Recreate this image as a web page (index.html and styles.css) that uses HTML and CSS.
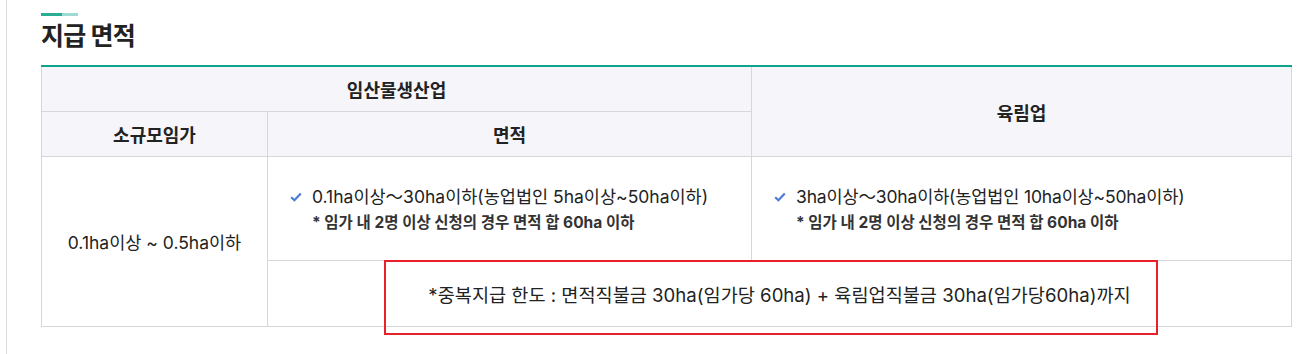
FILE: index.html
```html
<!DOCTYPE html>
<html lang="ko">
<head>
<meta charset="utf-8">
<link rel="stylesheet" href="styles.css">
</head>
<body>
<div class="page">
  <div class="title-bar"><span class="bar-dark"></span><span class="bar-light"></span></div>
  <h2 class="title">지급 면적</h2>
  <div class="table-wrap">
    <table class="area-table">
      <colgroup>
        <col class="c1"><col class="c2"><col class="c3">
      </colgroup>
      <thead>
        <tr class="h1">
          <th colspan="2">임산물생산업</th>
          <th rowspan="2">육림업</th>
        </tr>
        <tr class="h2">
          <th>소규모임가</th>
          <th>면적</th>
        </tr>
      </thead>
      <tbody>
        <tr class="b1">
          <td rowspan="2" class="center">0.1ha이상 ~ 0.5ha이하</td>
          <td class="list-cell">
            <div class="item"><svg class="check" viewBox="0 0 12 10" width="12" height="10"><path d="M1.2 5.2 L4.4 8.2 L10.8 1.6" fill="none" stroke="#4a7bd8" stroke-width="2.2"/></svg><span>0.1ha이상～30ha이하(농업법인 5ha이상~50ha이하)</span></div>
            <div class="note">* 임가 내 2명 이상 신청의 경우 면적 합 60ha 이하</div>
          </td>
          <td class="list-cell">
            <div class="item"><svg class="check" viewBox="0 0 12 10" width="12" height="10"><path d="M1.2 5.2 L4.4 8.2 L10.8 1.6" fill="none" stroke="#4a7bd8" stroke-width="2.2"/></svg><span class="narrow">3ha이상～30ha이하(농업법인 10ha이상~50ha이하)</span></div>
            <div class="note">* 임가 내 2명 이상 신청의 경우 면적 합 60ha 이하</div>
          </td>
        </tr>
        <tr class="b2">
          <td colspan="2" class="center limit">*중복지급 한도 : 면적직불금 30ha(임가당 60ha) + 육림업직불금 30ha(임가당60ha)까지</td>
        </tr>
      </tbody>
    </table>
    <div class="highlight"></div>
  </div>
</div>
</body>
</html>
```
FILE: styles.css
```css
html, body {
  margin: 0;
  padding: 0;
  background: #fff;
}
body {
  font-family: Inter, "Noto Sans CJK KR", sans-serif;
  color: #222;
}
.page {
  margin-left: 6px;
  border-left: 1px solid #dcdcdc;
  padding: 13px 15px 0 34px;
  height: 341px;
}
.title-bar {
  display: flex;
  height: 3px;
  width: 37px;
}
.bar-dark {
  width: 21px;
  background: #2aac95;
}
.bar-light {
  width: 16px;
  background: #9ddbd4;
}
.title {
  margin: 3px 0 0;
  font-size: 25px;
  font-weight: 700;
  line-height: 34px;
  color: #222;
  letter-spacing: -0.8px;
}
.table-wrap {
  position: relative;
  margin-top: 12px;
  width: 1250px;
}
.area-table {
  width: 1250px;
  border-collapse: collapse;
  border-top: 2px solid #0ea38b;
  table-layout: fixed;
}
.c1 { width: 226px; }
.c2 { width: 484px; }
.c3 { width: 540px; }
.area-table th,
.area-table td {
  border: 1px solid #d6d6dc;
  padding: 0;
}
.area-table th {
  background: #f5f5fa;
  font-size: 18px;
  font-weight: 700;
  color: #222;
}
.h1 th { height: 44px; }
.h2 th { height: 44px; }
.b1 td { height: 103px; }
.b2 td { height: 65px; }
.center {
  text-align: center;
  font-size: 17.5px;
  color: #222;
}
.list-cell {
  padding-left: 22px !important;
  vertical-align: middle;
}
.item {
  display: flex;
  align-items: center;
  font-size: 17.5px;
  line-height: 26px;
}
.narrow {
  letter-spacing: -0.15px;
}
.check {
  margin-right: 10px;
  flex: none;
}
.note {
  padding-left: 22px;
  margin-top: 3px;
  font-size: 15.5px;
  font-weight: 700;
  line-height: 20px;
  color: #333;
}
.limit {
  font-size: 18.6px;
}
.highlight {
  position: absolute;
  left: 343px;
  top: 195px;
  width: 770px;
  height: 71px;
  border: 2px solid #e8202a;
  pointer-events: none;
}
```
